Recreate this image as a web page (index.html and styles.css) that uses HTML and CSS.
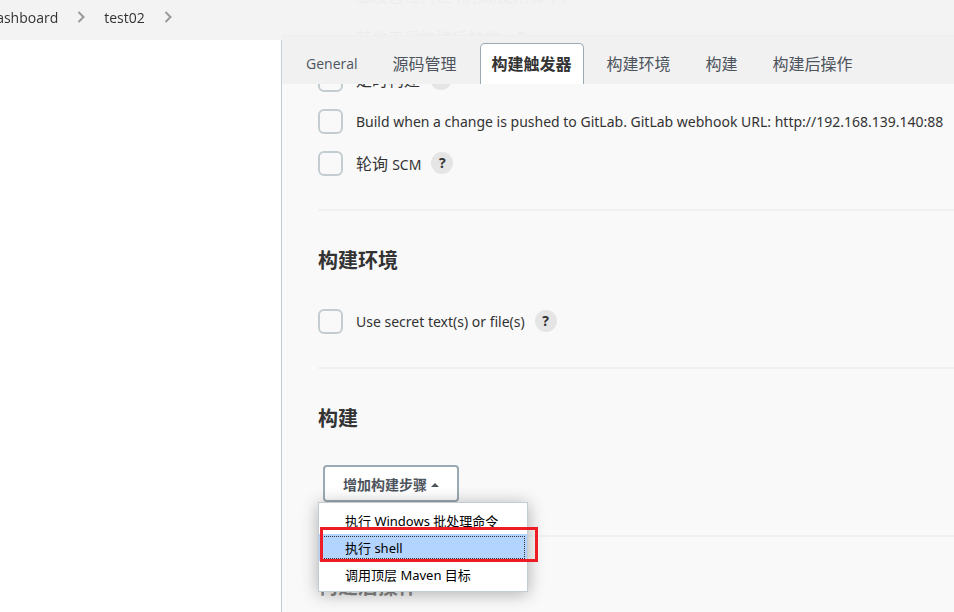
FILE: index.html
```html
<!DOCTYPE html>
<html lang="zh-CN">
<head>
<meta charset="utf-8">
<title>test02</title>
<link rel="stylesheet" href="styles.css">
</head>
<body>
<header class="topbar">
  <nav class="crumbs" aria-label="Breadcrumb">
    <a href="#">Dashboard</a>
    <svg class="chevron" viewBox="0 0 8 12" aria-hidden="true"><path d="M1.5 1l5 5-5 5"/></svg>
    <a href="#">test02</a>
    <svg class="chevron" viewBox="0 0 8 12" aria-hidden="true"><path d="M1.5 1l5 5-5 5"/></svg>
  </nav>
</header>
<div class="page">
  <aside class="side"></aside>
  <main class="main">
    <nav class="tabs">
      <a class="tab" href="#">General</a>
      <a class="tab" href="#">源码管理</a>
      <a class="tab tab-active" href="#triggers">构建触发器</a>
      <a class="tab" href="#env">构建环境</a>
      <a class="tab" href="#build">构建</a>
      <a class="tab" href="#post">构建后操作</a>
    </nav>
    <form class="config">
      <section class="section section-first" id="triggers">
        <div class="row"><input type="checkbox" id="remote"><label for="remote">触发远程构建 (例如,使用脚本)</label><button type="button" class="help">?</button></div>
        <div class="row"><input type="checkbox" id="after"><label for="after">其他工程构建后触发</label><button type="button" class="help">?</button></div>
        <div class="row"><input type="checkbox" id="timer"><label for="timer">定时构建</label><button type="button" class="help">?</button></div>
        <div class="row"><input type="checkbox" id="gitlab"><label class="latin" for="gitlab">Build when a change is pushed to GitLab. GitLab webhook URL: http://192.168.139.140:88</label></div>
        <div class="row"><input type="checkbox" id="scm"><label for="scm">轮询 <span class="latin">SCM</span></label><button type="button" class="help">?</button></div>
      </section>
      <section class="section" id="env">
        <h2>构建环境</h2>
        <div class="row"><input type="checkbox" id="secret"><label class="latin" for="secret">Use secret text(s) or file(s)</label><button type="button" class="help">?</button></div>
      </section>
      <section class="section" id="build">
        <h2>构建</h2>
        <div class="actions">
          <button type="button" class="add">增加构建步骤<svg class="caret" viewBox="0 0 8 4" aria-hidden="true"><path d="M0 4l4-4 4 4z"/></svg></button>
          <ul class="menu">
            <li><a href="#">执行 Windows 批处理命令</a></li>
            <li class="current"><a href="#">执行 shell</a></li>
            <li><a href="#">调用顶层 Maven 目标</a></li>
          </ul>
        </div>
      </section>
      <section class="section section-faded" id="post">
        <h2>构建后操作</h2>
      </section>
    </form>
  </main>
</div>
</body>
</html>
```
FILE: styles.css
```css
*, *::after { box-sizing: border-box; }

body {
  margin: 0;
  background: #fff;
  color: #333;
  font: 16px/24px "Open Sans", "Noto Sans CJK SC", sans-serif;
  overflow: hidden;
}

a { color: inherit; text-decoration: none; }

.latin { font-family: "Noto Sans", sans-serif; font-size: 14px; }

.topbar {
  position: fixed;
  top: 0;
  left: 0;
  right: 0;
  z-index: 2;
  height: 40px;
  background: rgba(243, 243, 243, 0.97);
}

.crumbs {
  display: flex;
  align-items: center;
  gap: 19px;
  height: 34px;
  margin-left: -14px;
  font-size: 14px;
}

.crumbs a { padding-top: 2px; }

.chevron {
  width: 8px;
  height: 12px;
  fill: none;
  stroke: #999;
  stroke-width: 2;
}

.page {
  display: grid;
  grid-template-columns: 282px minmax(0, 1fr);
  height: 100vh;
}

.side { border-right: 1px solid #c3cdd1; }

.main {
  overflow: hidden;
  background: #f9f9f9;
}

.tabs {
  position: fixed;
  top: 35px;
  left: 282px;
  right: 0;
  z-index: 3;
  display: flex;
  align-items: flex-end;
  gap: 11px;
  height: 49px;
  padding-left: 12px;
  background: #f1f1f1;
  border-top: 1px solid #eee;
}

.tab {
  height: 41px;
  padding: 0 11px;
  border: 1px solid transparent;
  border-bottom: 0;
  border-radius: 5px 5px 0 0;
  color: #4d545d;
  line-height: 40px;
}

.tab:first-child { font-size: 14px; }

.tab-active {
  background: #fff;
  border-color: #9ba9b2;
  color: #333;
  font-weight: 700;
}

.section {
  padding: 36px 0 25px;
  border-top: 2px solid #f1f1f1;
  margin-left: 36px;
}

.section-first {
  margin-top: -26px;
  padding-top: 0;
  border-top: 0;
}

.section-faded { color: #888; }

h2 {
  margin: 0 0 25px;
  font-size: 20px;
  line-height: 28px;
}

.row {
  display: flex;
  align-items: center;
  height: 42px;
  white-space: nowrap;
}

.row label { padding-top: 2px; }

input[type="checkbox"] {
  appearance: none;
  flex: none;
  width: 25px;
  height: 25px;
  margin: 0 13px 0 0;
  background: #f9f9f9;
  border: 2px solid #c3cdd1;
  border-radius: 6px;
}

.help {
  width: 22px;
  height: 22px;
  margin-left: 10px;
  padding: 0;
  border: 0;
  border-radius: 50%;
  background: #e5e5e5;
  color: #333;
  font: 700 14px/22px "Noto Sans", sans-serif;
}

.actions {
  position: relative;
  padding: 7px 5px 8px;
}

.add {
  display: flex;
  align-items: center;
  gap: 4px;
  height: 37px;
  padding: 2px 18px 0;
  background: #fff;
  border: 2px solid #9ba9b2;
  border-radius: 4px;
  color: #4d545d;
  font: 700 14px/20px "Noto Sans", "Noto Sans CJK SC", sans-serif;
}

.caret {
  width: 8px;
  height: 4px;
  fill: #4d545d;
}

.menu {
  position: absolute;
  top: 44px;
  left: 0;
  z-index: 1;
  width: 210px;
  margin: 0;
  padding: 4px 0 3px;
  list-style: none;
  background: #fff;
  border: 1px solid #c3cdd1;
  box-shadow: 0 2px 16px rgba(0, 0, 0, 0.3);
  color: #000;
  font-family: "Noto Sans", "Noto Sans CJK SC", sans-serif;
  font-size: 13px;
  line-height: 27px;
}

.menu a {
  display: block;
  height: 27px;
  padding: 1px 0 0 26px;
}

.current {
  position: relative;
  background: #b3d4ff;
}

.current a {
  outline: 1px dotted #333;
  outline-offset: -3px;
}

.current::after {
  content: "";
  position: absolute;
  top: -7px;
  left: 1px;
  width: 218px;
  height: 35px;
  border: 3px solid #ee1c24;
}
```
